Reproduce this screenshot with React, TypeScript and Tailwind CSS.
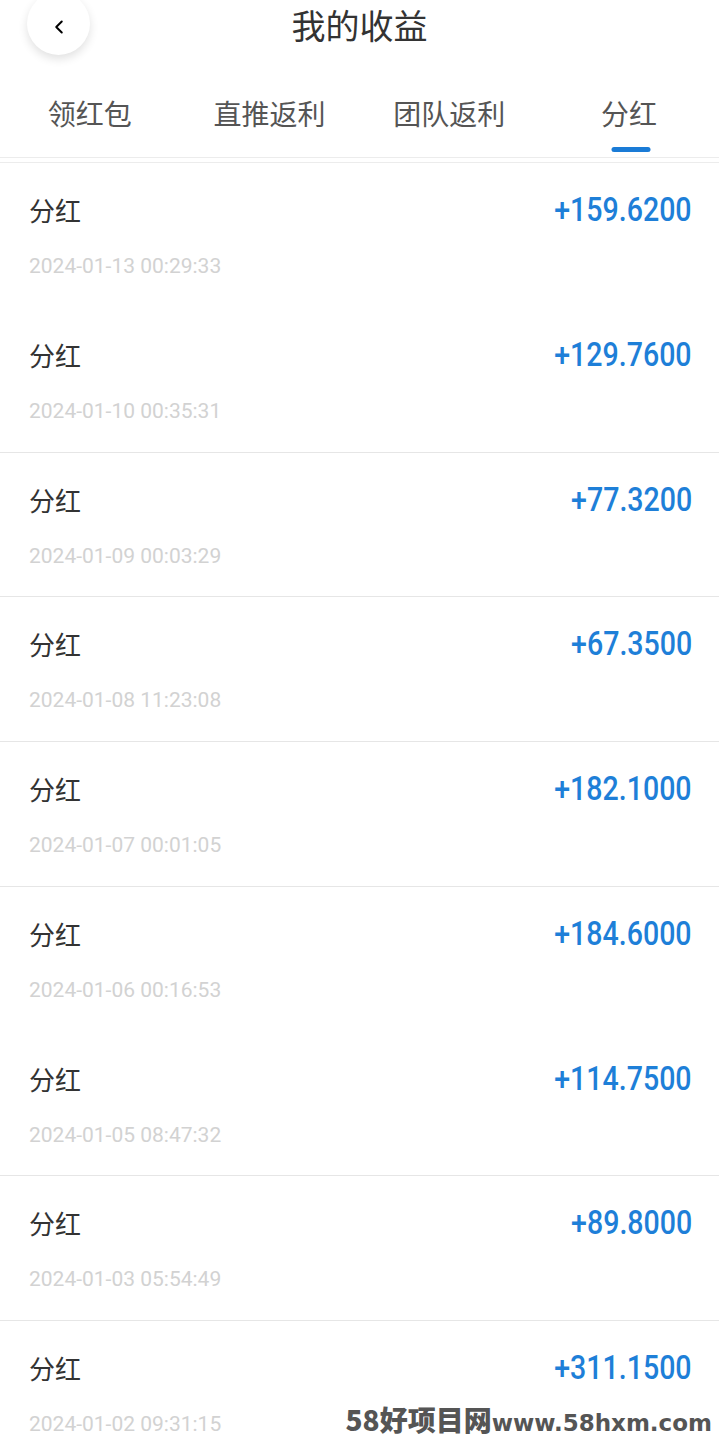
import { ChevronLeft } from 'lucide-react';

interface Record {
  amount: string;
  time: string;
  divider: boolean;
}

const tabs = ['领红包', '直推返利', '团队返利', '分红'];

// divider = line drawn under the row (the screenshot is missing a couple)
const records: Record[] = [
  { amount: '+159.6200', time: '2024-01-13 00:29:33', divider: false },
  { amount: '+129.7600', time: '2024-01-10 00:35:31', divider: true },
  { amount: '+77.3200', time: '2024-01-09 00:03:29', divider: true },
  { amount: '+67.3500', time: '2024-01-08 11:23:08', divider: true },
  { amount: '+182.1000', time: '2024-01-07 00:01:05', divider: true },
  { amount: '+184.6000', time: '2024-01-06 00:16:53', divider: false },
  { amount: '+114.7500', time: '2024-01-05 08:47:32', divider: true },
  { amount: '+89.8000', time: '2024-01-03 05:54:49', divider: true },
  { amount: '+311.1500', time: '2024-01-02 09:31:15', divider: false },
];

export default function App() {
  return (
    <div className="relative h-[1438px] w-[719px] overflow-hidden bg-white font-['Roboto','Noto_Sans_CJK_SC',sans-serif]">
      {/* Header */}
      <div className="relative flex h-[54px] items-center justify-center">
        <button className="absolute left-[27px] top-[-8px] flex h-[63px] w-[63px] items-center justify-center rounded-full bg-white shadow-[0_4px_10px_rgba(0,0,0,0.12)]">
          <ChevronLeft className="mt-[6px] h-[22px] w-[22px] text-black" strokeWidth={2.2} />
        </button>
        <h1 className="mt-[-5px] text-[34px] leading-none text-[#333] font-['Noto_Sans_CJK_SC',sans-serif]">我的收益</h1>
      </div>

      {/* Tabs */}
      <div className="grid h-[104px] grid-cols-4 border-b border-[#ececec]">
        {tabs.map((tab, i) => (
          <div key={tab} className="relative flex justify-center pt-[45px]">
            <span className="text-[28px] leading-none text-[#555] font-['Noto_Sans_CJK_SC',sans-serif]">{tab}</span>
            {i === 3 && (
              <span className="absolute left-[calc(50%+2px)] top-[93px] h-[5px] w-[39px] -translate-x-1/2 rounded-full bg-[#1a7bd6]" />
            )}
          </div>
        ))}
      </div>

      {/* List */}
      <div className="mt-[4px] border-t border-[#ececec]">
        {records.map((r, i) => (
          <div
            key={i}
            className={`flex h-[144.75px] justify-between pl-[29px] pr-[27px] ${r.divider ? 'border-b border-[#e6e6e6]' : ''}`}
          >
            <div className="flex flex-col pt-[33px]">
              <span className="text-[26px] leading-[28px] text-[#333] font-['Noto_Sans_CJK_SC',sans-serif]">分红</span>
              <span className="mt-[31px] text-[21px] leading-[22px] text-[#d2d2d2]">{r.time}</span>
            </div>
            <div className="pt-[29px]">
              <span className="inline-block origin-right scale-x-[0.84] text-[34px] font-medium leading-[34px] text-[#1e7fd8]">
                {r.amount}
              </span>
            </div>
          </div>
        ))}
      </div>

      {/* Watermark */}
      <div className="absolute bottom-[3px] right-[7px] flex items-baseline text-[#555] font-bold">
        <span className="text-[28px] leading-none font-['Noto_Sans_CJK_SC',sans-serif] font-black">58好项目网</span>
        <span className="text-[23px] leading-none font-['DejaVu_Sans',sans-serif]">www.58hxm.com</span>
      </div>
    </div>
  );
}
